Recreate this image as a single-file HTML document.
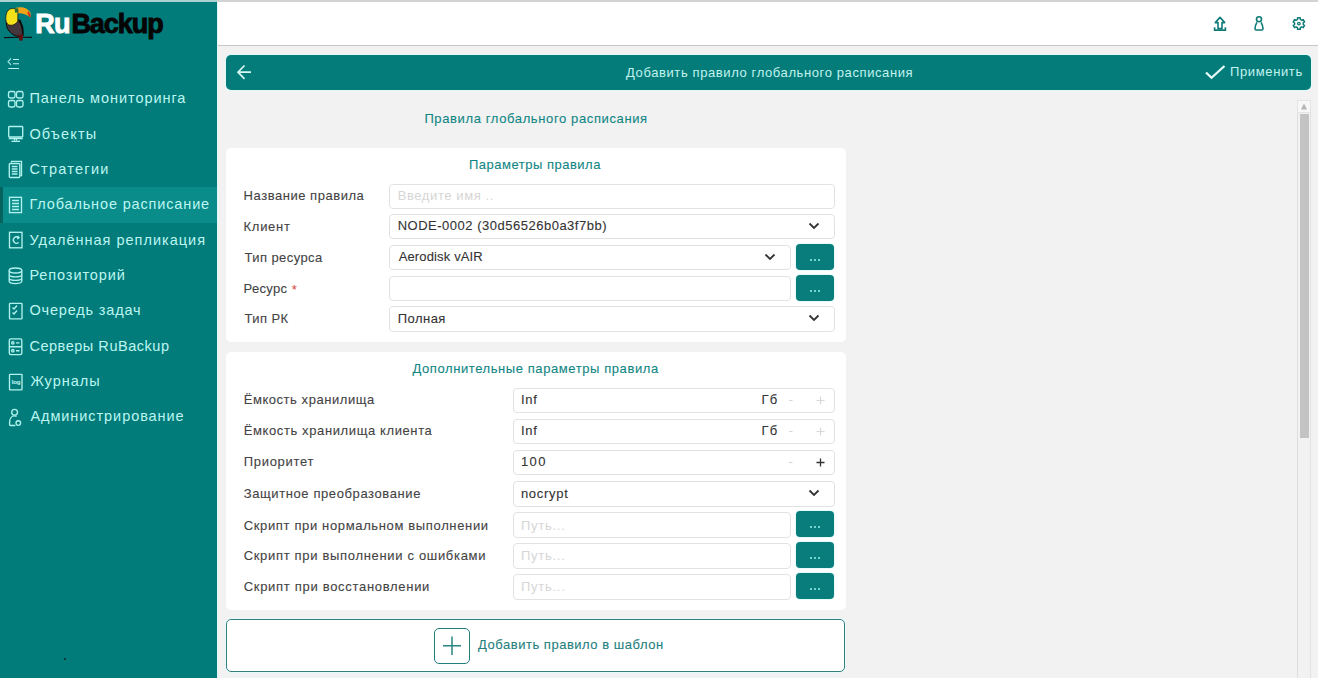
<!DOCTYPE html>
<html><head><meta charset="utf-8">
<style>
*{box-sizing:border-box;margin:0;padding:0}
html,body{width:1318px;height:678px;overflow:hidden;background:#f2f2f2;font-family:"Liberation Sans",sans-serif}
.a{position:absolute}
.t{position:absolute;white-space:nowrap;line-height:20px;font-family:"Liberation Sans",sans-serif;-webkit-text-stroke:0.1px currentColor}
#side{left:0;top:0;width:217px;height:678px;background:#027c7a}
#sideedge{left:217px;top:0;width:1px;height:678px;background:#dff7f7}
#topline{left:0;top:0;width:1318px;height:2px;background:#d3d3d3}
#topline2{left:0;top:0;width:217px;height:2px;background:#a9d2d1}
#active{left:0;top:187px;width:217px;height:36px;background:#0a8c8a}
#activebar{left:0;top:187px;width:2.5px;height:36px;background:#04625f}
#header{left:218px;top:2px;width:1100px;height:44px;background:#fff;border-bottom:1px solid #c6c6c6}
#bar{left:226px;top:55px;width:1085px;height:34.5px;background:#047c7a;border-radius:5px;box-shadow:0 0 0 1px #e2fafa}
.card{background:#fff;border-radius:5px}
.inp{background:#fff;border:1px solid #e2e2e2;border-radius:4px}
.btn{background:#097d7b;border-radius:4px;box-shadow:0 0 0 1px #e4fbfb}
.dots{position:absolute;left:14px;top:14.5px;width:10px;height:3px}
.dots i{position:absolute;top:0;width:2px;height:2px;background:#74d3cf}
#addbtn{left:226px;top:619px;width:619px;height:53px;background:#fff;border:1px solid #367f7d;border-radius:5px;box-shadow:0 0 0 1px #e6fbfb}
#plusbox{left:434px;top:628px;width:36px;height:36px;border:1.8px solid #237f7d;border-radius:5px}
</style></head>
<body>
<div id="side" class="a"></div>
<div id="active" class="a"></div>
<div id="activebar" class="a"></div>
<div id="sideedge" class="a"></div>
<div id="header" class="a"></div>
<div id="topline" class="a"></div>
<div id="topline2" class="a"></div>

<!-- logo -->
<svg class="a" style="left:0;top:0" width="40" height="46" viewBox="0 0 40 46">
  <path d="M4 37.6 C12 37.2 24 37.2 32 37.4" stroke="#111" stroke-width="1.1" fill="none"/>
  <path d="M6.3 21 C5.8 27.5 8.5 32 14 35.2 L19.5 37 L22.6 35.5 L22.8 27 L20 20 Z" fill="#43363d" stroke="#0d0d0d" stroke-width="1"/>
  <path d="M19.5 21 C22 25 23.2 30 22.8 36" stroke="#0a0a0a" stroke-width="1.6" fill="none"/>
  <path d="M7 12 C5 17 5.5 23 8.5 24.8 C12 26 16 24.5 17.8 21 L17.8 10.5 C15 7.5 9.5 7.5 7 12 Z" fill="#f6e21a" stroke="#111" stroke-width="0.7"/>
  <path d="M15 8.2 C20 6.2 27.5 7 30.6 13 L30.3 17.2 C26.5 14 21.5 12.8 17.5 13.2 Z" fill="#f3a418"/>
  <path d="M28.2 11.3 C29.6 12.6 30.7 14.5 30.6 17.2 L29 16.6 C28.6 15.2 28 14 27.2 13 Z" fill="#d3301c"/>
  <path d="M14.5 8.6 L18 8.3 L18.6 12.4 L15.2 12.8 Z" fill="#2f6b30"/>
  <path d="M18 35 L23 34 L22.6 40.5 L19.6 40.8 Z" fill="#5e1010"/>
</svg>
<div class="t" style="left:35.3px;top:3.8px;line-height:40px;font-size:27px;font-weight:bold;letter-spacing:-0.75px;-webkit-text-stroke:0.95px"><span style="color:#fff;-webkit-text-stroke-color:#fff">Ru</span><span style="color:#050505;-webkit-text-stroke-color:#050505;margin-left:1.6px;letter-spacing:-1.02px">Backup</span></div>

<!-- collapse icon -->
<svg class="a" style="left:0;top:50px" width="30" height="25">
  <path d="M11 8.5 L8 11.7 L11 14.9" stroke="#9ee9e6" stroke-width="1.1" fill="none"/>
  <path d="M13 9.5 H19 M13 13.8 H19 M8.3 18.5 H19" stroke="#b9f3f1" stroke-width="1.1"/>
</svg>

<!-- sidebar icons -->
<svg class="a" style="left:0;top:80px" width="30" height="360" viewBox="0 80 30 360" fill="none" stroke="#b0f2ee" stroke-width="1.35">
  <!-- dashboard -->
  <rect x="8.5" y="91.5" width="6.5" height="6.5" rx="1.8"/><rect x="16.5" y="91.5" width="6.5" height="6.5" rx="1.8"/>
  <rect x="8.5" y="100.5" width="6.5" height="6.5" rx="1.8"/><rect x="16.5" y="100.5" width="6.5" height="6.5" rx="1.8"/>
  <!-- monitor -->
  <rect x="8.7" y="126.5" width="14" height="10.5" rx="0.8"/>
  <path d="M8.7 138.5 H22.7 M14.5 139 V140.5 M16.5 139 V140.5 M11.5 141.3 H20"/>
  <!-- strategies -->
  <path d="M11.5 162.5 V161.3 H21.5 V175.5 H20.3"/>
  <rect x="9.3" y="163.5" width="10.5" height="14" rx="1"/>
  <path d="M11.8 166.5 H17.5 M11.8 169 H17.5 M11.8 171.5 H17.5 M11.8 174 H17.5"/>
  <!-- global schedule -->
  <rect x="9.5" y="197.3" width="12" height="15.3"/>
  <path d="M12 200.5 H19 M12 203.5 H19 M12 206.5 H19 M12 209.5 H19"/>
  <!-- replication -->
  <rect x="9.5" y="232.3" width="12.5" height="15.5"/>
  <path d="M18.5 237.5 A3.2 3.2 0 1 0 18.6 242.5"/>
  <path d="M17.5 236 L19 237.7 L17.2 238.8" />
  <!-- repository -->
  <ellipse cx="15.5" cy="270.5" rx="6.3" ry="2.5"/>
  <path d="M9.2 270.5 V281 C9.2 284.5 21.8 284.5 21.8 281 V270.5 M9.2 274.5 C9.2 277.7 21.8 277.7 21.8 274.5 M9.2 278 C9.2 281.2 21.8 281.2 21.8 278"/>
  <!-- queue -->
  <rect x="9.5" y="303.3" width="12.5" height="15.5" rx="0.6"/>
  <path d="M12.5 307.5 L14 309 L17 305.5 M12.5 312.5 L14 314 L17 310.5"/>
  <!-- servers -->
  <rect x="9.3" y="338.8" width="12.5" height="15.8" rx="1.5"/>
  <path d="M9.3 346.7 H21.8 M16 342.8 H19.5 M16 350.7 H19.5"/>
  <circle cx="12.8" cy="342.8" r="1.2"/><circle cx="12.8" cy="350.7" r="1.2"/>
  <!-- logs -->
  <rect x="9.5" y="374.3" width="12.5" height="15.5" rx="0.6"/>
  <!-- admin -->
  <circle cx="14.6" cy="412.2" r="2.9"/>
  <path d="M16.6 416.3 C15.9 416 15.3 415.9 14.6 415.9 C11.5 415.9 9.6 418.8 9.6 422.5 V424.6 C9.6 425.2 10 425.5 10.6 425.5 H15.3"/>
  <circle cx="18.3" cy="423" r="2.3"/>
  </svg>
<div class="t" style="left:11.8px;top:372px;font-size:6px;font-weight:bold;color:#bdf0ee;letter-spacing:-0.2px">log</div>
<div class="a" style="left:64px;top:658px;width:2px;height:2px;background:#103a3a"></div>

<!-- header icons -->
<svg class="a" style="left:1200px;top:8px" width="118" height="32" fill="none" stroke="#0f7b79" stroke-width="1.6">
  <path d="M20 9.4 L15.3 14.6 H18 V20.6 H22 V14.6 H24.7 Z" stroke-linejoin="round"/>
  <path d="M14.6 19.2 V22.1 H25.4 V19.2"/>
  <circle cx="59" cy="11.3" r="2.5"/>
  <path d="M56.9 14.3 C55.4 16.8 55 19 55 20.8 C55 21.6 55.4 22 56.2 22 H61.8 C62.6 22 63 21.6 63 20.8 C63 19 62.6 16.8 61.1 14.3"/>
  <path d="M97.57 9.85 L100.23 9.85 L100.33 11.44 L101.79 12.28 L103.21 11.58 L104.54 13.88 L103.22 14.76 L103.22 16.44 L104.54 17.32 L103.21 19.62 L101.79 18.92 L100.33 19.76 L100.23 21.35 L97.57 21.35 L97.47 19.76 L96.01 18.92 L94.59 19.62 L93.26 17.32 L94.58 16.44 L94.58 14.76 L93.26 13.88 L94.59 11.58 L96.01 12.28 L97.47 11.44 Z" stroke-linejoin="round" stroke-width="1.5"/>
  <circle cx="98.9" cy="15.6" r="1.3" stroke-width="1.3"/>
</svg>

<!-- teal bar -->
<div id="bar" class="a"></div>
<svg class="a" style="left:226px;top:55px" width="40" height="34" fill="none" stroke="#d8f7f5" stroke-width="1.7">
  <path d="M18.5 10.5 L12 17.2 L18.5 23.8 M12 17.2 H25"/>
</svg>
<svg class="a" style="left:1195px;top:55px" width="40" height="34" fill="none" stroke="#e6fbfa" stroke-width="2.3">
  <path d="M11 17.5 L16.5 22.8 L29.5 11"/>
</svg>

<!-- cards -->
<div class="a card" style="left:226px;top:147.5px;width:620px;height:194.5px"></div>
<div class="a card" style="left:226px;top:352px;width:620px;height:258px"></div>

<!-- card1 inputs -->
<div class="a inp" style="left:389px;top:183.5px;width:446px;height:25.5px"></div>
<div class="a inp" style="left:389px;top:213.5px;width:446px;height:25.5px"></div>
<div class="a inp" style="left:389px;top:244.5px;width:402px;height:25.5px"></div>
<div class="a inp" style="left:389px;top:275.5px;width:402px;height:25.5px"></div>
<div class="a inp" style="left:389px;top:306px;width:446px;height:25.5px"></div>
<div class="a btn" style="left:796px;top:244px;width:38px;height:26px"><div class="dots"><i style="left:0"></i><i style="left:4px"></i><i style="left:8px"></i></div></div>
<div class="a btn" style="left:796px;top:275px;width:38px;height:26px"><div class="dots"><i style="left:0"></i><i style="left:4px"></i><i style="left:8px"></i></div></div>

<!-- card2 inputs -->
<div class="a inp" style="left:513px;top:387.5px;width:322px;height:25.5px"></div>
<div class="a inp" style="left:513px;top:418.5px;width:322px;height:25.5px"></div>
<div class="a inp" style="left:513px;top:449.5px;width:322px;height:25.5px"></div>
<div class="a inp" style="left:513px;top:481px;width:322px;height:25.5px"></div>
<div class="a inp" style="left:513px;top:512px;width:278px;height:25.5px"></div>
<div class="a inp" style="left:513px;top:543px;width:278px;height:25.5px"></div>
<div class="a inp" style="left:513px;top:574px;width:278px;height:25.5px"></div>
<div class="a btn" style="left:796px;top:511px;width:38px;height:26px"><div class="dots"><i style="left:0"></i><i style="left:4px"></i><i style="left:8px"></i></div></div>
<div class="a btn" style="left:796px;top:542px;width:38px;height:26px"><div class="dots"><i style="left:0"></i><i style="left:4px"></i><i style="left:8px"></i></div></div>
<div class="a btn" style="left:796px;top:573px;width:38px;height:26px"><div class="dots"><i style="left:0"></i><i style="left:4px"></i><i style="left:8px"></i></div></div>

<!-- chevrons and +/- -->
<svg class="a" style="left:0;top:0" width="1318" height="678" fill="none" stroke="#333" stroke-width="1.8">
  <path d="M809.5 223.5 L814 228 L818.5 223.5"/>
  <path d="M765.5 254.5 L770 259 L774.5 254.5"/>
  <path d="M809.5 315.5 L814 320 L818.5 315.5"/>
  <path d="M809.5 490.5 L814 495 L818.5 490.5"/>
  <g stroke="#d8d8d8" stroke-width="1.2">
    <path d="M789 400.5 H792.5 M816.5 400.5 H824.5 M820.5 396.5 V404.5"/>
    <path d="M789 431.5 H792.5 M816.5 431.5 H824.5 M820.5 427.5 V435.5"/>
    <path d="M789 462.5 H792.5"/>
  </g>
  <path d="M816.5 462.5 H824.5 M820.5 458.5 V466.5" stroke="#333" stroke-width="1.3"/>
</svg>

<!-- add rule -->
<div id="addbtn" class="a"></div>
<div id="plusbox" class="a"></div>
<svg class="a" style="left:434px;top:628px" width="36" height="36" fill="none" stroke="#2a8583" stroke-width="1.5">
  <path d="M9 17.8 H27 M18 8.5 V27"/>
</svg>

<!-- scrollbar -->
<div class="a" style="left:1297px;top:100px;width:1px;height:578px;background:#dedede"></div>
<div class="a" style="left:1310px;top:100px;width:1px;height:578px;background:#e2e2e2"></div>
<div class="a" style="left:1297px;top:100px;width:14px;height:13px;background:#f7f7f7;border:1px solid #e4e4e4"></div>
<svg class="a" style="left:1297px;top:100px" width="14" height="13"><path d="M7 3.5 L10 9.5 H4 Z" fill="#b4b4b4"/></svg>
<div class="a" style="left:1300px;top:113.5px;width:8.5px;height:324px;background:#c3c3c3"></div>

<div class=t style="left:29.40px;top:88.20px;font-size:14.5px;letter-spacing:0.941px;color:#bdf6f1;-webkit-text-stroke:0">Панель мониторинга</div>
<div class=t style="left:29.40px;top:123.53px;font-size:14.5px;letter-spacing:1.167px;color:#bdf6f1;-webkit-text-stroke:0">Объекты</div>
<div class=t style="left:29.40px;top:158.86px;font-size:14.5px;letter-spacing:1.250px;color:#bdf6f1;-webkit-text-stroke:0">Стратегии</div>
<div class=t style="left:29.40px;top:194.19px;font-size:14.5px;letter-spacing:0.850px;color:#bdf6f1;-webkit-text-stroke:0">Глобальное расписание</div>
<div class=t style="left:29.40px;top:229.52px;font-size:14.5px;letter-spacing:1.000px;color:#bdf6f1;-webkit-text-stroke:0">Удалённая репликация</div>
<div class=t style="left:29.40px;top:264.85px;font-size:14.5px;letter-spacing:0.900px;color:#bdf6f1;-webkit-text-stroke:0">Репозиторий</div>
<div class=t style="left:29.40px;top:300.18px;font-size:14.5px;letter-spacing:0.833px;color:#bdf6f1;-webkit-text-stroke:0">Очередь задач</div>
<div class=t style="left:29.40px;top:335.51px;font-size:14.5px;letter-spacing:0.533px;color:#bdf6f1;-webkit-text-stroke:0">Серверы RuBackup</div>
<div class=t style="left:30.40px;top:370.84px;font-size:14.5px;letter-spacing:1.000px;color:#bdf6f1;-webkit-text-stroke:0">Журналы</div>
<div class=t style="left:30.40px;top:406.17px;font-size:14.5px;letter-spacing:0.938px;color:#bdf6f1;-webkit-text-stroke:0">Администрирование</div>
<div class=t style="left:626.00px;top:63.30px;font-size:13px;letter-spacing:0.605px;color:#c2f3ef;-webkit-text-stroke:0">Добавить правило глобального расписания</div>
<div class=t style="left:1230.00px;top:62.30px;font-size:13px;letter-spacing:0.625px;color:#c2f3ef;-webkit-text-stroke:0">Применить</div>
<div class=t style="left:424.40px;top:109.40px;font-size:13px;letter-spacing:0.621px;color:#108684;">Правила глобального расписания</div>
<div class=t style="left:469.00px;top:154.60px;font-size:13px;letter-spacing:0.500px;color:#108684;">Параметры правила</div>
<div class=t style="left:412.50px;top:358.50px;font-size:13px;letter-spacing:0.581px;color:#108684;">Дополнительные параметры правила</div>
<div class=t style="left:243.60px;top:186.00px;font-size:13px;letter-spacing:0.533px;color:#434343;">Название правила</div>
<div class=t style="left:243.60px;top:216.50px;font-size:13px;letter-spacing:0.700px;color:#434343;">Клиент</div>
<div class=t style="left:244.60px;top:247.50px;font-size:13px;letter-spacing:0.400px;color:#434343;">Тип ресурса</div>
<div class=t style="left:243.60px;top:278.50px;font-size:13px;letter-spacing:0.300px;color:#434343;">Ресурс</div>
<div class=t style="left:244.60px;top:309.30px;font-size:13px;letter-spacing:0.400px;color:#434343;">Тип РК</div>
<div class=t style="left:291.80px;top:279.50px;font-size:13px;letter-spacing:0.000px;color:#d9534f;">*</div>
<div class=t style="left:397.70px;top:186.40px;font-size:13px;letter-spacing:0.600px;color:#d6d6d6;-webkit-text-stroke:0">Введите имя ..</div>
<div class=t style="left:397.70px;top:216.30px;font-size:13px;letter-spacing:0.507px;color:#333333;">NODE-0002 (30d56526b0a3f7bb)</div>
<div class=t style="left:398.70px;top:247.20px;font-size:13px;letter-spacing:0.142px;color:#333333;">Aerodisk vAIR</div>
<div class=t style="left:397.70px;top:309.30px;font-size:13px;letter-spacing:0.480px;color:#333333;">Полная</div>
<div class=t style="left:243.70px;top:390.00px;font-size:13px;letter-spacing:0.550px;color:#434343;">Ёмкость хранилища</div>
<div class=t style="left:243.70px;top:421.20px;font-size:13px;letter-spacing:0.612px;color:#434343;">Ёмкость хранилища клиента</div>
<div class=t style="left:243.70px;top:452.20px;font-size:13px;letter-spacing:0.713px;color:#434343;">Приоритет</div>
<div class=t style="left:243.70px;top:483.80px;font-size:13px;letter-spacing:0.605px;color:#434343;">Защитное преобразование</div>
<div class=t style="left:243.70px;top:515.70px;font-size:13px;letter-spacing:0.645px;color:#434343;">Скрипт при нормальном выполнении</div>
<div class=t style="left:243.70px;top:546.40px;font-size:13px;letter-spacing:0.677px;color:#434343;">Скрипт при выполнении с ошибками</div>
<div class=t style="left:243.70px;top:577.20px;font-size:13px;letter-spacing:0.700px;color:#434343;">Скрипт при восстановлении</div>
<div class=t style="left:520.90px;top:390.00px;font-size:13px;letter-spacing:0.750px;color:#333333;">Inf</div>
<div class=t style="left:520.90px;top:421.20px;font-size:13px;letter-spacing:0.750px;color:#333333;">Inf</div>
<div class=t style="left:761.60px;top:390.00px;font-size:13px;letter-spacing:1.000px;color:#333333;">Гб</div>
<div class=t style="left:761.60px;top:421.20px;font-size:13px;letter-spacing:1.000px;color:#333333;">Гб</div>
<div class=t style="left:520.90px;top:452.20px;font-size:13px;letter-spacing:1.400px;color:#333333;">100</div>
<div class=t style="left:520.90px;top:483.60px;font-size:13px;letter-spacing:0.717px;color:#333333;">nocrypt</div>
<div class=t style="left:520.90px;top:515.60px;font-size:13px;letter-spacing:0.750px;color:#d6d6d6;-webkit-text-stroke:0">Путь...</div>
<div class=t style="left:520.90px;top:546.40px;font-size:13px;letter-spacing:0.750px;color:#d6d6d6;-webkit-text-stroke:0">Путь...</div>
<div class=t style="left:520.90px;top:577.20px;font-size:13px;letter-spacing:0.750px;color:#d6d6d6;-webkit-text-stroke:0">Путь...</div>
<div class=t style="left:478.10px;top:635.30px;font-size:13px;letter-spacing:0.521px;color:#24807e;">Добавить правило в шаблон</div>
</body></html>
